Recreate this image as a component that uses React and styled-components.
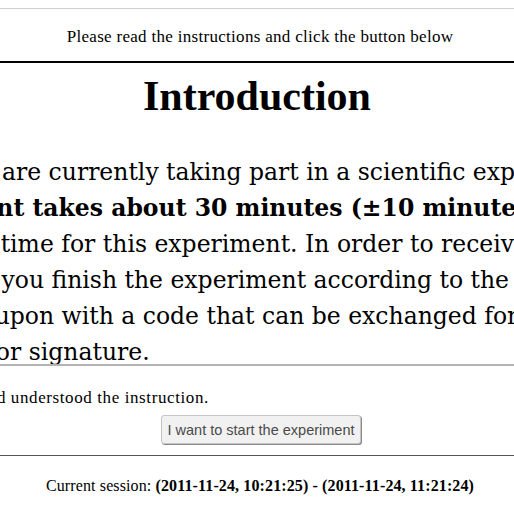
import React from "react";
import styled, { createGlobalStyle } from "styled-components";

const Global = createGlobalStyle`
  html, body { margin: 0; padding: 0; background: #fff; overflow: hidden; }
  body { font-family: "Liberation Serif", serif; color: #000; }
`;

const Viewport = styled.div`
  display: flex;
  justify-content: center;
  width: 100%;
  overflow: hidden;
  padding-top: 8px;
`;

const Column = styled.div`
  flex: 0 0 1000px;
  width: 1000px;
  display: flex;
  flex-direction: column;
`;

const Header = styled.header`
  border-top: 1px solid #cfcfcf;
  border-bottom: 2px solid #000;
  padding: 18px 0 14px 6px;
  text-align: center;
  font-family: "Liberation Serif", serif;
  font-size: 17px;
  letter-spacing: 0.3px;
  line-height: 20px;
`;

const Title = styled.h1`
  margin: 9px 0 35px;
  text-align: center;
  font-family: "Liberation Serif", serif;
  font-weight: bold;
  font-size: 42px;
  line-height: 48px;
`;

const Intro = styled.div`
  font-family: "DejaVu Serif", serif;
  font-size: 23.5px;
  line-height: 36px;
  margin-top: -1px;
  margin-bottom: -6px;
`;

const Line = styled.div`
  white-space: nowrap;
  margin-left: ${(p) => p.$indent || 0}px;
  font-weight: ${(p) => (p.$bold ? "bold" : "normal")};
`;

const Rule = styled.hr`
  margin: 0;
  border: 0;
  border-top: ${(p) => p.$size}px solid ${(p) => p.$color};
  width: 100%;
`;

const Confirm = styled.label`
  display: flex;
  align-items: center;
  gap: 6px;
  margin-top: 22px;
  padding-left: 3px;
  font-family: "Liberation Serif", serif;
  font-size: 17px;
  letter-spacing: 0.6px;
  line-height: 20px;
  white-space: nowrap;
`;

const ButtonRow = styled.div`
  display: flex;
  justify-content: center;
  padding: 7px 0 11px 8px;
`;

const StartButton = styled.button`
  height: 29px;
  width: 200px;
  padding: 0;
  background: #f1f1f1;
  border: 1px solid #c4c4c4;
  border-radius: 3px;
  box-shadow: 1px 1px 0 #8a8a8a;
  font-family: "Liberation Sans", sans-serif;
  font-size: 14.5px;
  white-space: nowrap;
  color: #4a4a4a;
  cursor: pointer;
`;

const Footer = styled.footer`
  padding: 20px 0 0 6px;
  text-align: center;
  font-family: "Liberation Serif", serif;
  font-size: 16px;
  letter-spacing: 0.12px;
  line-height: 20px;
`;

export default function App() {
  return (
    <>
      <Global />
      <Viewport>
        <Column>
          <Header>Please read the instructions and click the button below</Header>
          <Title>Introduction</Title>
          <Intro>
            <Line $indent={-17}>Dear participant, you are currently taking part in a scientific experiment.</Line>
            <Line $bold $indent={-13}>Note: the experiment takes about 30 minutes (±10 minutes).</Line>
            <Line $indent={-34}>Please reserve enough time for this experiment. In order to receive your</Line>
            <Line $indent={10}>It is important that you finish the experiment according to the instructions.</Line>
            <Line $indent={-38}>At the end you get a coupon with a code that can be exchanged for money</Line>
            <Line $indent={-66}>without using your name or signature.</Line>
          </Intro>
          <Rule $size={2} $color="#b3b3b3" />
          <Confirm>
            <input type="checkbox" />
            I confirm that I have read and understood the instruction.
          </Confirm>
          <ButtonRow>
            <StartButton>I want to start the experiment</StartButton>
          </ButtonRow>
          <Rule $size={1} $color="#555" />
          <Footer>
            Current session: <b>(2011-11-24, 10:21:25) - (2011-11-24, 11:21:24)</b>
          </Footer>
        </Column>
      </Viewport>
    </>
  );
}
